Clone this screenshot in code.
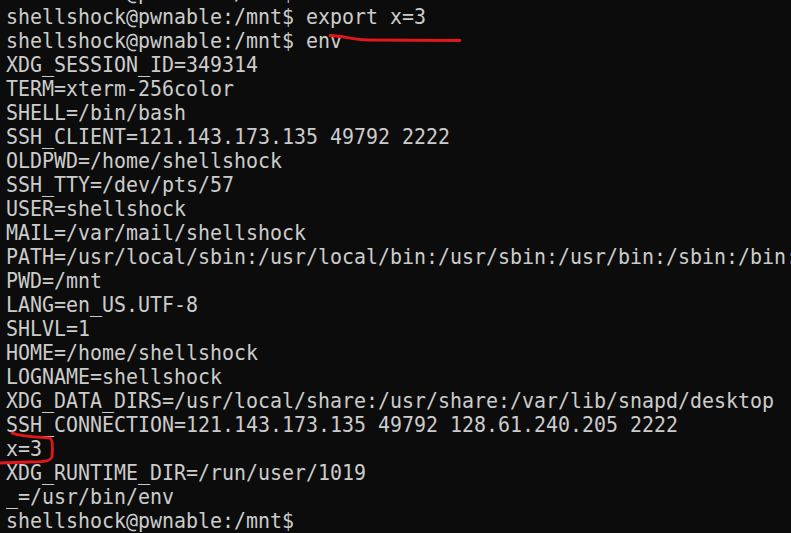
const lines = [
  "shellshock@pwnable:/mnt$ ls",
  "shellshock@pwnable:/mnt$ export x=3",
  "shellshock@pwnable:/mnt$ env",
  "XDG_SESSION_ID=349314",
  "TERM=xterm-256color",
  "SHELL=/bin/bash",
  "SSH_CLIENT=121.143.173.135 49792 2222",
  "OLDPWD=/home/shellshock",
  "SSH_TTY=/dev/pts/57",
  "USER=shellshock",
  "MAIL=/var/mail/shellshock",
  "PATH=/usr/local/sbin:/usr/local/bin:/usr/sbin:/usr/bin:/sbin:/bin:/usr/games:/usr/local/games:/snap/bin",
  "PWD=/mnt",
  "LANG=en_US.UTF-8",
  "SHLVL=1",
  "HOME=/home/shellshock",
  "LOGNAME=shellshock",
  "XDG_DATA_DIRS=/usr/local/share:/usr/share:/var/lib/snapd/desktop",
  "SSH_CONNECTION=121.143.173.135 49792 128.61.240.205 2222",
  "x=3",
  "XDG_RUNTIME_DIR=/run/user/1019",
  "_=/usr/bin/env",
  "shellshock@pwnable:/mnt$",
];

export default function App() {
  return (
    <div className="relative h-[533px] w-[791px] overflow-hidden bg-[#0c0c0c]">
      {/* console font is tall and narrow: squeeze a 22px mono down to 12px cells */}
      <div className="-mt-[19px] ml-[6px] origin-left scale-x-[0.906] font-['DejaVu_Sans_Mono',monospace] text-[22px] leading-[24px] text-[#cccccc]">
        {lines.map((l, i) => (
          <div key={i} className="whitespace-pre">{l}</div>
        ))}
      </div>

      {/* red pen marks */}
      <svg className="absolute left-0 top-0" width="791" height="533" fill="none">
        <path d="M330 35.5 C345 36 352 40 368 40 L460 40.5" stroke="#e3161c" strokeWidth="2.8" strokeLinecap="round" />
        <path d="M12 433 C22 437 40 437 50 438 C54 441 52 452 52 457 C50 462 40 462 28 462 L0 463" stroke="#e3161c" strokeWidth="2.8" strokeLinecap="round" />
      </svg>
    </div>
  );
}
